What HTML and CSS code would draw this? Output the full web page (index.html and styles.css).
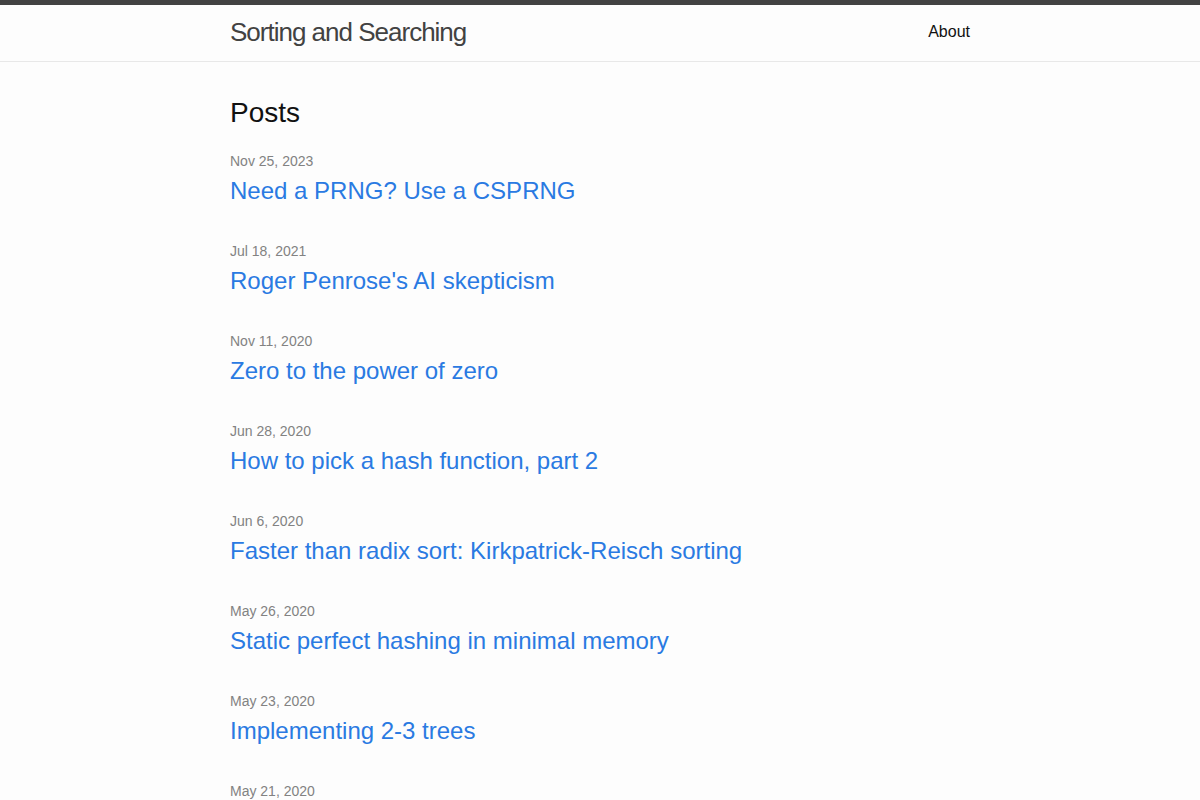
FILE: index.html
```html
<!DOCTYPE html>
<html lang="en">

<head>
  <meta charset="UTF-8">
  <meta name="viewport" content="width=device-width, initial-scale=1.0">
  <title>Sorting and Searching</title>
  <link rel="stylesheet" href="styles.css">
</head>

<body>
  <header class="site-header">
    <div class="wrapper header-row">
      <a class="site-title" href="#">Sorting and Searching</a>
      <nav class="site-nav">
        <a class="page-link" href="#">About</a>
      </nav>
    </div>
  </header>

  <main class="page-content">
    <div class="wrapper">
      <h2 class="post-list-heading">Posts</h2>
      <ul class="post-list">
        <li>
          <span class="post-meta">Nov 25, 2023</span>
          <h3><a class="post-link" href="#">Need a PRNG? Use a CSPRNG</a></h3>
        </li>
        <li>
          <span class="post-meta">Jul 18, 2021</span>
          <h3><a class="post-link" href="#">Roger Penrose's AI skepticism</a></h3>
        </li>
        <li>
          <span class="post-meta">Nov 11, 2020</span>
          <h3><a class="post-link" href="#">Zero to the power of zero</a></h3>
        </li>
        <li>
          <span class="post-meta">Jun 28, 2020</span>
          <h3><a class="post-link" href="#">How to pick a hash function, part 2</a></h3>
        </li>
        <li>
          <span class="post-meta">Jun 6, 2020</span>
          <h3><a class="post-link" href="#">Faster than radix sort: Kirkpatrick-Reisch sorting</a></h3>
        </li>
        <li>
          <span class="post-meta">May 26, 2020</span>
          <h3><a class="post-link" href="#">Static perfect hashing in minimal memory</a></h3>
        </li>
        <li>
          <span class="post-meta">May 23, 2020</span>
          <h3><a class="post-link" href="#">Implementing 2-3 trees</a></h3>
        </li>
        <li>
          <span class="post-meta">May 21, 2020</span>
          <h3><a class="post-link" href="#">Sorting in linear time</a></h3>
        </li>
      </ul>
    </div>
  </main>
</body>

</html>
```

FILE: styles.css
```css
body {
  margin: 0;
  padding: 0;
  font-family: "Liberation Sans", Arial, sans-serif;
  font-size: 16px;
  line-height: 1.5;
  color: #111111;
  background-color: #fdfdfd;
}

a {
  text-decoration: none;
}

.wrapper {
  max-width: 740px;
  margin: 0 auto;
  padding: 0 30px;
}

.site-header {
  border-top: 5px solid #424242;
  border-bottom: 1px solid #e8e8e8;
  min-height: 56px;
}

.header-row {
  display: flex;
  justify-content: space-between;
  align-items: center;
}

.site-title {
  font-size: 26px;
  font-weight: 300;
  line-height: 54px;
  letter-spacing: -1px;
  color: #424242;
}

.page-link {
  color: #111111;
  line-height: 54px;
}

.page-content {
  padding: 30px 0;
}

.post-list-heading {
  font-size: 28px;
  font-weight: normal;
  margin: 0 0 15px;
}

.post-list {
  list-style: none;
  margin: 0;
  padding: 0;
}

.post-list li {
  margin-bottom: 30px;
}

.post-meta {
  font-size: 14px;
  color: #828282;
}

.post-list h3 {
  margin: 0;
  font-weight: normal;
  font-size: 24px;
}

.post-link {
  display: block;
  color: #2a7ae2;
}
```
